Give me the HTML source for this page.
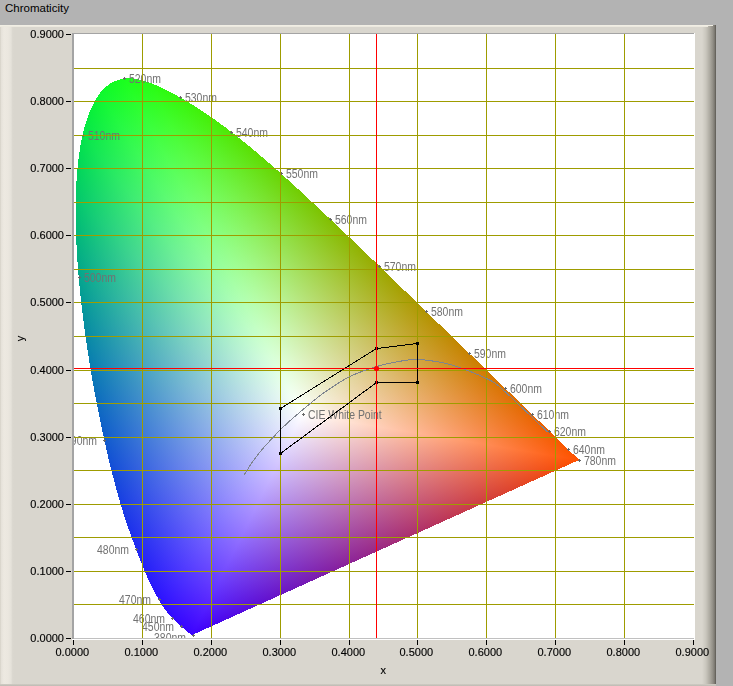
<!DOCTYPE html>
<html><head><meta charset="utf-8"><title>Chromaticity</title>
<style>
html,body{margin:0;padding:0}
body{width:733px;height:686px;overflow:hidden;background:#b3b3b3;font-family:"Liberation Sans",sans-serif}
#title{position:absolute;left:5px;top:1px;font-size:11.5px;line-height:14px;color:#000}
#panel{position:absolute;left:0;top:25px;width:716px;height:661px;background:#d9d6ce}
#hl-left{position:absolute;left:0;top:0;width:14px;height:661px;background:linear-gradient(90deg,#d5d1c7 0,#e6e2da 1.5px,#ede9e1 4px,#ebe7df 8px,#e5e2da 11px,#dbd8d0 12.5px,#d9d6ce 14px)}
#hl-top{position:absolute;left:0;top:0;width:713px;height:1px;background:#f1eee4}
#hl-top2{position:absolute;left:0;top:1px;width:708px;height:1px;background:#ece9df}
#sh-right{position:absolute;left:702px;top:0;width:14px;height:661px;background:linear-gradient(90deg,#d9d6ce 0,#c9c6bd 4px,#aba89f 8px,#908d85 11px,#76736c 13px,#56544e 14px)}
#sh-bot{position:absolute;left:0;top:659px;width:716px;height:2px;background:linear-gradient(180deg,#cfccc4,#bdbab2)}
svg{position:absolute;left:0;top:0}
text{font-family:"Liberation Sans",sans-serif;font-size:11px}
.fan polygon{mix-blend-mode:screen}
</style></head><body>
<div id="title">Chromaticity</div>
<div id="panel"><div id="hl-left"></div><div id="sh-right"></div><div id="sh-bot"></div><div id="hl-top2"></div><div id="hl-top"></div></div>
<svg width="733" height="686" viewBox="0 0 733 686">
<defs>
<clipPath id="plot"><rect x="74" y="34" width="621" height="604"/></clipPath>
<linearGradient id="g0" gradientUnits="userSpaceOnUse" x1="-238.38" y1="521.9" x2="-104.43" y2="228.64"><stop offset="0" stop-color="#000"/><stop offset="1" stop-color="#f00"/></linearGradient>
<linearGradient id="g1" gradientUnits="userSpaceOnUse" x1="100.53" y1="650.72" x2="69.65" y2="450.87"><stop offset="0" stop-color="#000"/><stop offset="1" stop-color="#0f0"/></linearGradient>
<linearGradient id="g2" gradientUnits="userSpaceOnUse" x1="727.01" y1="361.92" x2="408.41" y2="203.32"><stop offset="0" stop-color="#000"/><stop offset="1" stop-color="#00f"/></linearGradient>
<linearGradient id="g3" gradientUnits="userSpaceOnUse" x1="-271.22" y1="267.86" x2="-53.92" y2="53.26"><stop offset="0" stop-color="#000"/><stop offset="1" stop-color="#f00"/></linearGradient>
<linearGradient id="g4" gradientUnits="userSpaceOnUse" x1="-55.35" y1="614.24" x2="-34.64" y2="384.36"><stop offset="0" stop-color="#000"/><stop offset="1" stop-color="#0f0"/></linearGradient>
<linearGradient id="g5" gradientUnits="userSpaceOnUse" x1="988.46" y1="490.3" x2="408.4" y2="202.57"><stop offset="0" stop-color="#000"/><stop offset="1" stop-color="#00f"/></linearGradient>
<linearGradient id="g6" gradientUnits="userSpaceOnUse" x1="-179.87" y1="100.99" x2="53.41" y2="-29.99"><stop offset="0" stop-color="#000"/><stop offset="1" stop-color="#f00"/></linearGradient>
<linearGradient id="g7" gradientUnits="userSpaceOnUse" x1="-184.57" y1="497.01" x2="-98.63" y2="265.6"><stop offset="0" stop-color="#000"/><stop offset="1" stop-color="#0f0"/></linearGradient>
<linearGradient id="g8" gradientUnits="userSpaceOnUse" x1="2608.65" y1="1220.45" x2="407.91" y2="190.84"><stop offset="0" stop-color="#000"/><stop offset="1" stop-color="#00f"/></linearGradient>
<linearGradient id="g9" gradientUnits="userSpaceOnUse" x1="-153.46" y1="76.23" x2="77.86" y2="-38.68"><stop offset="0" stop-color="#000"/><stop offset="1" stop-color="#f00"/></linearGradient>
<linearGradient id="g10" gradientUnits="userSpaceOnUse" x1="-204.99" y1="460.26" x2="-103.99" y2="233.48"><stop offset="0" stop-color="#000"/><stop offset="1" stop-color="#0f0"/></linearGradient>
<linearGradient id="g11" gradientUnits="userSpaceOnUse" x1="6312.91" y1="2474.52" x2="403.69" y2="158.24"><stop offset="0" stop-color="#000"/><stop offset="1" stop-color="#00f"/></linearGradient>
<linearGradient id="g12" gradientUnits="userSpaceOnUse" x1="-156.01" y1="78.42" x2="75.54" y2="-37.97"><stop offset="0" stop-color="#000"/><stop offset="1" stop-color="#f00"/></linearGradient>
<linearGradient id="g13" gradientUnits="userSpaceOnUse" x1="-203.23" y1="463.87" x2="-103.65" y2="236.58"><stop offset="0" stop-color="#000"/><stop offset="1" stop-color="#0f0"/></linearGradient>
<linearGradient id="g14" gradientUnits="userSpaceOnUse" x1="5496.04" y1="2256.39" x2="405.14" y2="166.33"><stop offset="0" stop-color="#000"/><stop offset="1" stop-color="#00f"/></linearGradient>
<linearGradient id="g15" gradientUnits="userSpaceOnUse" x1="-152.89" y1="75.73" x2="78.43" y2="-38.85"><stop offset="0" stop-color="#000"/><stop offset="1" stop-color="#f00"/></linearGradient>
<linearGradient id="g16" gradientUnits="userSpaceOnUse" x1="-205.39" y1="459.51" x2="-104.05" y2="232.79"><stop offset="0" stop-color="#000"/><stop offset="1" stop-color="#0f0"/></linearGradient>
<linearGradient id="g17" gradientUnits="userSpaceOnUse" x1="6539.17" y1="2490.17" x2="402.69" y2="153.35"><stop offset="0" stop-color="#000"/><stop offset="1" stop-color="#00f"/></linearGradient>
<linearGradient id="g18" gradientUnits="userSpaceOnUse" x1="-137.71" y1="63.44" x2="92.43" y2="-42.58"><stop offset="0" stop-color="#000"/><stop offset="1" stop-color="#f00"/></linearGradient>
<linearGradient id="g19" gradientUnits="userSpaceOnUse" x1="-215.04" y1="438.17" x2="-105.22" y2="214.39"><stop offset="0" stop-color="#000"/><stop offset="1" stop-color="#0f0"/></linearGradient>
<linearGradient id="g20" gradientUnits="userSpaceOnUse" x1="25078.24" y1="-25742.56" x2="-59.72" y2="61.31"><stop offset="0" stop-color="#000"/><stop offset="1" stop-color="#00f"/></linearGradient>
<linearGradient id="g21" gradientUnits="userSpaceOnUse" x1="-112.41" y1="45.74" x2="115.25" y2="-46.9"><stop offset="0" stop-color="#000"/><stop offset="1" stop-color="#f00"/></linearGradient>
<linearGradient id="g22" gradientUnits="userSpaceOnUse" x1="-227.83" y1="401.6" x2="-104.22" y2="183.71"><stop offset="0" stop-color="#000"/><stop offset="1" stop-color="#0f0"/></linearGradient>
<linearGradient id="g23" gradientUnits="userSpaceOnUse" x1="-2928.26" y1="-2397.43" x2="384.8" y2="315.04"><stop offset="0" stop-color="#000"/><stop offset="1" stop-color="#00f"/></linearGradient>
<linearGradient id="g24" gradientUnits="userSpaceOnUse" x1="-74.71" y1="24.94" x2="148.16" y2="-49.46"><stop offset="0" stop-color="#000"/><stop offset="1" stop-color="#f00"/></linearGradient>
<linearGradient id="g25" gradientUnits="userSpaceOnUse" x1="-239.12" y1="345" x2="-95.84" y2="138.28"><stop offset="0" stop-color="#000"/><stop offset="1" stop-color="#0f0"/></linearGradient>
<linearGradient id="g26" gradientUnits="userSpaceOnUse" x1="-971.99" y1="-719.74" x2="394.16" y2="291.86"><stop offset="0" stop-color="#000"/><stop offset="1" stop-color="#00f"/></linearGradient>
<linearGradient id="g27" gradientUnits="userSpaceOnUse" x1="-42.51" y1="11.7" x2="175.64" y2="-48.35"><stop offset="0" stop-color="#000"/><stop offset="1" stop-color="#f00"/></linearGradient>
<linearGradient id="g28" gradientUnits="userSpaceOnUse" x1="-241.24" y1="295.52" x2="-81.97" y2="100.42"><stop offset="0" stop-color="#000"/><stop offset="1" stop-color="#0f0"/></linearGradient>
<linearGradient id="g29" gradientUnits="userSpaceOnUse" x1="-497.55" y1="-375.03" x2="392.68" y2="295.98"><stop offset="0" stop-color="#000"/><stop offset="1" stop-color="#00f"/></linearGradient>
<linearGradient id="g30" gradientUnits="userSpaceOnUse" x1="-15.56" y1="3.53" x2="198.7" y2="-45.12"><stop offset="0" stop-color="#000"/><stop offset="1" stop-color="#f00"/></linearGradient>
<linearGradient id="g31" gradientUnits="userSpaceOnUse" x1="-237.92" y1="254.52" x2="-65.57" y2="70.14"><stop offset="0" stop-color="#000"/><stop offset="1" stop-color="#0f0"/></linearGradient>
<linearGradient id="g32" gradientUnits="userSpaceOnUse" x1="-288.16" y1="-228.06" x2="388.24" y2="307.26"><stop offset="0" stop-color="#000"/><stop offset="1" stop-color="#00f"/></linearGradient>
<linearGradient id="g33" gradientUnits="userSpaceOnUse" x1="2.99" y1="-0.58" x2="215.14" y2="-41.49"><stop offset="0" stop-color="#000"/><stop offset="1" stop-color="#f00"/></linearGradient>
<linearGradient id="g34" gradientUnits="userSpaceOnUse" x1="-233.59" y1="227.6" x2="-51.83" y2="50.5"><stop offset="0" stop-color="#000"/><stop offset="1" stop-color="#0f0"/></linearGradient>
<linearGradient id="g35" gradientUnits="userSpaceOnUse" x1="-189.52" y1="-159.54" x2="381.77" y2="321.37"><stop offset="0" stop-color="#000"/><stop offset="1" stop-color="#00f"/></linearGradient>
<linearGradient id="g36" gradientUnits="userSpaceOnUse" x1="26.72" y1="-3.89" x2="237.66" y2="-34.62"><stop offset="0" stop-color="#000"/><stop offset="1" stop-color="#f00"/></linearGradient>
<linearGradient id="g37" gradientUnits="userSpaceOnUse" x1="-227.07" y1="196.11" x2="-31.56" y2="27.26"><stop offset="0" stop-color="#000"/><stop offset="1" stop-color="#0f0"/></linearGradient>
<linearGradient id="g38" gradientUnits="userSpaceOnUse" x1="-96.82" y1="-92.47" x2="365.7" y2="349.28"><stop offset="0" stop-color="#000"/><stop offset="1" stop-color="#00f"/></linearGradient>
<linearGradient id="g39" gradientUnits="userSpaceOnUse" x1="42.52" y1="-4.68" x2="254.39" y2="-28"><stop offset="0" stop-color="#000"/><stop offset="1" stop-color="#f00"/></linearGradient>
<linearGradient id="g40" gradientUnits="userSpaceOnUse" x1="-223.87" y1="178.24" x2="-16.6" y2="13.22"><stop offset="0" stop-color="#000"/><stop offset="1" stop-color="#0f0"/></linearGradient>
<linearGradient id="g41" gradientUnits="userSpaceOnUse" x1="-51.07" y1="-55.64" x2="345.22" y2="376.17"><stop offset="0" stop-color="#000"/><stop offset="1" stop-color="#00f"/></linearGradient>
<linearGradient id="g42" gradientUnits="userSpaceOnUse" x1="56.63" y1="-4.05" x2="272.09" y2="-19.45"><stop offset="0" stop-color="#000"/><stop offset="1" stop-color="#f00"/></linearGradient>
<linearGradient id="g43" gradientUnits="userSpaceOnUse" x1="-225.11" y1="166.72" x2="-2.63" y2="1.95"><stop offset="0" stop-color="#000"/><stop offset="1" stop-color="#0f0"/></linearGradient>
<linearGradient id="g44" gradientUnits="userSpaceOnUse" x1="-20.26" y1="-26.73" x2="310.31" y2="409.35"><stop offset="0" stop-color="#000"/><stop offset="1" stop-color="#00f"/></linearGradient>
<linearGradient id="g45" gradientUnits="userSpaceOnUse" x1="70.75" y1="-1.5" x2="294.22" y2="-6.23"><stop offset="0" stop-color="#000"/><stop offset="1" stop-color="#f00"/></linearGradient>
<linearGradient id="g46" gradientUnits="userSpaceOnUse" x1="-235.4" y1="162.25" x2="11.68" y2="-8.05"><stop offset="0" stop-color="#000"/><stop offset="1" stop-color="#0f0"/></linearGradient>
<linearGradient id="g47" gradientUnits="userSpaceOnUse" x1="-0.7" y1="-1.26" x2="246.62" y2="446.04"><stop offset="0" stop-color="#000"/><stop offset="1" stop-color="#00f"/></linearGradient>
<linearGradient id="g48" gradientUnits="userSpaceOnUse" x1="85.88" y1="4.85" x2="325.52" y2="18.39"><stop offset="0" stop-color="#000"/><stop offset="1" stop-color="#f00"/></linearGradient>
<linearGradient id="g49" gradientUnits="userSpaceOnUse" x1="-268.81" y1="171.29" x2="27.61" y2="-17.59"><stop offset="0" stop-color="#000"/><stop offset="1" stop-color="#0f0"/></linearGradient>
<linearGradient id="g50" gradientUnits="userSpaceOnUse" x1="5.54" y1="18.94" x2="135.73" y2="463.79"><stop offset="0" stop-color="#000"/><stop offset="1" stop-color="#00f"/></linearGradient>
<linearGradient id="g51" gradientUnits="userSpaceOnUse" x1="99.63" y1="18.67" x2="367.94" y2="68.95"><stop offset="0" stop-color="#000"/><stop offset="1" stop-color="#f00"/></linearGradient>
<linearGradient id="g52" gradientUnits="userSpaceOnUse" x1="-372.27" y1="218.08" x2="44.77" y2="-26.23"><stop offset="0" stop-color="#000"/><stop offset="1" stop-color="#0f0"/></linearGradient>
<linearGradient id="g53" gradientUnits="userSpaceOnUse" x1="-0.02" y1="22.22" x2="-0.3" y2="414.58"><stop offset="0" stop-color="#000"/><stop offset="1" stop-color="#00f"/></linearGradient>
<linearGradient id="g54" gradientUnits="userSpaceOnUse" x1="102.21" y1="46.42" x2="407.47" y2="185.06"><stop offset="0" stop-color="#000"/><stop offset="1" stop-color="#f00"/></linearGradient>
<linearGradient id="g55" gradientUnits="userSpaceOnUse" x1="-894.72" y1="475.36" x2="64.53" y2="-34.29"><stop offset="0" stop-color="#000"/><stop offset="1" stop-color="#0f0"/></linearGradient>
<linearGradient id="g56" gradientUnits="userSpaceOnUse" x1="-1.5" y1="4.92" x2="-90.01" y2="294.74"><stop offset="0" stop-color="#000"/><stop offset="1" stop-color="#00f"/></linearGradient>
<linearGradient id="g57" gradientUnits="userSpaceOnUse" x1="67.83" y1="74.59" x2="343.68" y2="377.92"><stop offset="0" stop-color="#000"/><stop offset="1" stop-color="#f00"/></linearGradient>
<linearGradient id="g58" gradientUnits="userSpaceOnUse" x1="2184.42" y1="-1160.57" x2="64.53" y2="-34.29"><stop offset="0" stop-color="#000"/><stop offset="1" stop-color="#0f0"/></linearGradient>
<linearGradient id="g59" gradientUnits="userSpaceOnUse" x1="9.04" y1="-16" x2="-104.31" y2="184.77"><stop offset="0" stop-color="#000"/><stop offset="1" stop-color="#00f"/></linearGradient>
<linearGradient id="g60" gradientUnits="userSpaceOnUse" x1="28.83" y1="65.33" x2="202.66" y2="459.14"><stop offset="0" stop-color="#000"/><stop offset="1" stop-color="#f00"/></linearGradient>
<linearGradient id="g61" gradientUnits="userSpaceOnUse" x1="796.84" y1="-382.92" x2="84.32" y2="-40.52"><stop offset="0" stop-color="#000"/><stop offset="1" stop-color="#0f0"/></linearGradient>
<linearGradient id="g62" gradientUnits="userSpaceOnUse" x1="19" y1="-27.06" x2="-94.98" y2="135.29"><stop offset="0" stop-color="#000"/><stop offset="1" stop-color="#00f"/></linearGradient>
<linearGradient id="g63" gradientUnits="userSpaceOnUse" x1="11.85" y1="47.11" x2="116.14" y2="461.82"><stop offset="0" stop-color="#000"/><stop offset="1" stop-color="#f00"/></linearGradient>
<linearGradient id="g64" gradientUnits="userSpaceOnUse" x1="630.2" y1="-287.59" x2="94.22" y2="-43"><stop offset="0" stop-color="#000"/><stop offset="1" stop-color="#0f0"/></linearGradient>
<linearGradient id="g65" gradientUnits="userSpaceOnUse" x1="25.24" y1="-32.78" x2="-87.68" y2="113.87"><stop offset="0" stop-color="#000"/><stop offset="1" stop-color="#00f"/></linearGradient>
<linearGradient id="g66" gradientUnits="userSpaceOnUse" x1="2.79" y1="25.42" x2="48.61" y2="442.74"><stop offset="0" stop-color="#000"/><stop offset="1" stop-color="#f00"/></linearGradient>
<linearGradient id="g67" gradientUnits="userSpaceOnUse" x1="551.5" y1="-238.23" x2="104.46" y2="-45.12"><stop offset="0" stop-color="#000"/><stop offset="1" stop-color="#0f0"/></linearGradient>
<linearGradient id="g68" gradientUnits="userSpaceOnUse" x1="31.43" y1="-37.96" x2="-80.48" y2="97.22"><stop offset="0" stop-color="#000"/><stop offset="1" stop-color="#00f"/></linearGradient>
<linearGradient id="g69" gradientUnits="userSpaceOnUse" x1="0.03" y1="5.01" x2="2.4" y2="416.53"><stop offset="0" stop-color="#000"/><stop offset="1" stop-color="#f00"/></linearGradient>
<linearGradient id="g70" gradientUnits="userSpaceOnUse" x1="511.44" y1="-209.44" x2="114.12" y2="-46.74"><stop offset="0" stop-color="#000"/><stop offset="1" stop-color="#0f0"/></linearGradient>
<linearGradient id="g71" gradientUnits="userSpaceOnUse" x1="37.12" y1="-42.41" x2="-74.08" y2="84.63"><stop offset="0" stop-color="#000"/><stop offset="1" stop-color="#00f"/></linearGradient>
<linearGradient id="g72" gradientUnits="userSpaceOnUse" x1="0.82" y1="-12" x2="-26.81" y2="392.24"><stop offset="0" stop-color="#000"/><stop offset="1" stop-color="#f00"/></linearGradient>
<linearGradient id="g73" gradientUnits="userSpaceOnUse" x1="491.31" y1="-191.5" x2="122.8" y2="-47.86"><stop offset="0" stop-color="#000"/><stop offset="1" stop-color="#0f0"/></linearGradient>
<linearGradient id="g74" gradientUnits="userSpaceOnUse" x1="42.05" y1="-46.07" x2="-68.8" y2="75.39"><stop offset="0" stop-color="#000"/><stop offset="1" stop-color="#00f"/></linearGradient>
<linearGradient id="g75" gradientUnits="userSpaceOnUse" x1="2.63" y1="-23.43" x2="-42.2" y2="376.05"><stop offset="0" stop-color="#000"/><stop offset="1" stop-color="#f00"/></linearGradient>
<linearGradient id="g76" gradientUnits="userSpaceOnUse" x1="483.32" y1="-181.39" x2="129.25" y2="-48.51"><stop offset="0" stop-color="#000"/><stop offset="1" stop-color="#0f0"/></linearGradient>
<linearGradient id="g77" gradientUnits="userSpaceOnUse" x1="45.52" y1="-48.59" x2="-65.28" y2="69.69"><stop offset="0" stop-color="#000"/><stop offset="1" stop-color="#00f"/></linearGradient>
<linearGradient id="g78" gradientUnits="userSpaceOnUse" x1="4.19" y1="-30.68" x2="-50.08" y2="366.54"><stop offset="0" stop-color="#000"/><stop offset="1" stop-color="#f00"/></linearGradient>
<linearGradient id="g79" gradientUnits="userSpaceOnUse" x1="480.93" y1="-175.63" x2="133.8" y2="-48.86"><stop offset="0" stop-color="#000"/><stop offset="1" stop-color="#0f0"/></linearGradient>
<linearGradient id="g80" gradientUnits="userSpaceOnUse" x1="47.81" y1="-50.25" x2="-63.11" y2="66.33"><stop offset="0" stop-color="#000"/><stop offset="1" stop-color="#00f"/></linearGradient>
<linearGradient id="g81" gradientUnits="userSpaceOnUse" x1="5.61" y1="-36.51" x2="-55.29" y2="359.71"><stop offset="0" stop-color="#000"/><stop offset="1" stop-color="#f00"/></linearGradient>
<linearGradient id="g82" gradientUnits="userSpaceOnUse" x1="480.8" y1="-171.32" x2="137.82" y2="-49.11"><stop offset="0" stop-color="#000"/><stop offset="1" stop-color="#0f0"/></linearGradient>
<linearGradient id="g83" gradientUnits="userSpaceOnUse" x1="49.7" y1="-51.63" x2="-61.43" y2="63.81"><stop offset="0" stop-color="#000"/><stop offset="1" stop-color="#00f"/></linearGradient>
<linearGradient id="g84" gradientUnits="userSpaceOnUse" x1="6.05" y1="-38.26" x2="-56.58" y2="357.93"><stop offset="0" stop-color="#000"/><stop offset="1" stop-color="#f00"/></linearGradient>
<linearGradient id="g85" gradientUnits="userSpaceOnUse" x1="481.23" y1="-170.1" x2="139.13" y2="-49.18"><stop offset="0" stop-color="#000"/><stop offset="1" stop-color="#0f0"/></linearGradient>
<linearGradient id="g86" gradientUnits="userSpaceOnUse" x1="50.28" y1="-52.05" x2="-60.95" y2="63.1"><stop offset="0" stop-color="#000"/><stop offset="1" stop-color="#00f"/></linearGradient>
<linearGradient id="g87" gradientUnits="userSpaceOnUse" x1="6.73" y1="-41.04" x2="-58.3" y2="355.53"><stop offset="0" stop-color="#000"/><stop offset="1" stop-color="#f00"/></linearGradient>
<linearGradient id="g88" gradientUnits="userSpaceOnUse" x1="482.57" y1="-168.22" x2="141.36" y2="-49.28"><stop offset="0" stop-color="#000"/><stop offset="1" stop-color="#0f0"/></linearGradient>
<linearGradient id="g89" gradientUnits="userSpaceOnUse" x1="51.21" y1="-52.75" x2="-60.22" y2="62.03"><stop offset="0" stop-color="#000"/><stop offset="1" stop-color="#00f"/></linearGradient>
<linearGradient id="g90" gradientUnits="userSpaceOnUse" x1="6.96" y1="-42.01" x2="-58.8" y2="354.82"><stop offset="0" stop-color="#000"/><stop offset="1" stop-color="#f00"/></linearGradient>
<linearGradient id="g91" gradientUnits="userSpaceOnUse" x1="483.25" y1="-167.57" x2="142.19" y2="-49.31"><stop offset="0" stop-color="#000"/><stop offset="1" stop-color="#0f0"/></linearGradient>
<linearGradient id="g92" gradientUnits="userSpaceOnUse" x1="51.54" y1="-53" x2="-59.98" y2="61.68"><stop offset="0" stop-color="#000"/><stop offset="1" stop-color="#00f"/></linearGradient>
<linearGradient id="g93" gradientUnits="userSpaceOnUse" x1="6.95" y1="-41.97" x2="-58.78" y2="354.85"><stop offset="0" stop-color="#000"/><stop offset="1" stop-color="#f00"/></linearGradient>
<linearGradient id="g94" gradientUnits="userSpaceOnUse" x1="483.21" y1="-167.6" x2="142.15" y2="-49.31"><stop offset="0" stop-color="#000"/><stop offset="1" stop-color="#0f0"/></linearGradient>
<linearGradient id="g95" gradientUnits="userSpaceOnUse" x1="51.52" y1="-52.99" x2="-59.99" y2="61.7"><stop offset="0" stop-color="#000"/><stop offset="1" stop-color="#00f"/></linearGradient>
<linearGradient id="g96" gradientUnits="userSpaceOnUse" x1="6.67" y1="-40.63" x2="-58.32" y2="355.5"><stop offset="0" stop-color="#000"/><stop offset="1" stop-color="#f00"/></linearGradient>
<linearGradient id="g97" gradientUnits="userSpaceOnUse" x1="481.81" y1="-168.44" x2="140.9" y2="-49.26"><stop offset="0" stop-color="#000"/><stop offset="1" stop-color="#0f0"/></linearGradient>
<linearGradient id="g98" gradientUnits="userSpaceOnUse" x1="51.07" y1="-52.63" x2="-60.3" y2="62.14"><stop offset="0" stop-color="#000"/><stop offset="1" stop-color="#00f"/></linearGradient>
<linearGradient id="g99" gradientUnits="userSpaceOnUse" x1="7.21" y1="-43.25" x2="-59.05" y2="354.46"><stop offset="0" stop-color="#000"/><stop offset="1" stop-color="#f00"/></linearGradient>
<linearGradient id="g100" gradientUnits="userSpaceOnUse" x1="484.92" y1="-166.83" x2="143.45" y2="-49.35"><stop offset="0" stop-color="#000"/><stop offset="1" stop-color="#0f0"/></linearGradient>
<linearGradient id="g101" gradientUnits="userSpaceOnUse" x1="51.97" y1="-53.35" x2="-59.72" y2="61.31"><stop offset="0" stop-color="#000"/><stop offset="1" stop-color="#00f"/></linearGradient>
<linearGradient id="g102" gradientUnits="userSpaceOnUse" x1="6.87" y1="-41.54" x2="-58.67" y2="355.01"><stop offset="0" stop-color="#000"/><stop offset="1" stop-color="#f00"/></linearGradient>
<linearGradient id="g103" gradientUnits="userSpaceOnUse" x1="482.69" y1="-167.86" x2="141.73" y2="-49.29"><stop offset="0" stop-color="#000"/><stop offset="1" stop-color="#0f0"/></linearGradient>
<linearGradient id="g104" gradientUnits="userSpaceOnUse" x1="51.38" y1="-52.87" x2="-60.08" y2="61.83"><stop offset="0" stop-color="#000"/><stop offset="1" stop-color="#00f"/></linearGradient>
<linearGradient id="g105" gradientUnits="userSpaceOnUse" x1="6.82" y1="-41.3" x2="-58.63" y2="355.07"><stop offset="0" stop-color="#000"/><stop offset="1" stop-color="#f00"/></linearGradient>
<linearGradient id="g106" gradientUnits="userSpaceOnUse" x1="482.35" y1="-168.01" x2="141.49" y2="-49.28"><stop offset="0" stop-color="#000"/><stop offset="1" stop-color="#0f0"/></linearGradient>
<linearGradient id="g107" gradientUnits="userSpaceOnUse" x1="51.29" y1="-52.8" x2="-60.13" y2="61.9"><stop offset="0" stop-color="#000"/><stop offset="1" stop-color="#00f"/></linearGradient>
<linearGradient id="g108" gradientUnits="userSpaceOnUse" x1="6.29" y1="-38.4" x2="-58.22" y2="355.64"><stop offset="0" stop-color="#000"/><stop offset="1" stop-color="#f00"/></linearGradient>
<linearGradient id="g109" gradientUnits="userSpaceOnUse" x1="477.99" y1="-169.69" x2="138.43" y2="-49.14"><stop offset="0" stop-color="#000"/><stop offset="1" stop-color="#0f0"/></linearGradient>
<linearGradient id="g110" gradientUnits="userSpaceOnUse" x1="50.28" y1="-51.97" x2="-60.71" y2="62.75"><stop offset="0" stop-color="#000"/><stop offset="1" stop-color="#00f"/></linearGradient>
<linearGradient id="g111" gradientUnits="userSpaceOnUse" x1="7.2" y1="-43.46" x2="-58.77" y2="354.86"><stop offset="0" stop-color="#000"/><stop offset="1" stop-color="#f00"/></linearGradient>
<linearGradient id="g112" gradientUnits="userSpaceOnUse" x1="485.88" y1="-166.76" x2="143.82" y2="-49.36"><stop offset="0" stop-color="#000"/><stop offset="1" stop-color="#0f0"/></linearGradient>
<linearGradient id="g113" gradientUnits="userSpaceOnUse" x1="52.05" y1="-53.43" x2="-59.72" y2="61.31"><stop offset="0" stop-color="#000"/><stop offset="1" stop-color="#00f"/></linearGradient>
<linearGradient id="g114" gradientUnits="userSpaceOnUse" x1="7.2" y1="-43.46" x2="-58.77" y2="354.86"><stop offset="0" stop-color="#000"/><stop offset="1" stop-color="#f00"/></linearGradient>
<linearGradient id="g115" gradientUnits="userSpaceOnUse" x1="485.88" y1="-166.76" x2="143.82" y2="-49.36"><stop offset="0" stop-color="#000"/><stop offset="1" stop-color="#0f0"/></linearGradient>
<linearGradient id="g116" gradientUnits="userSpaceOnUse" x1="52.05" y1="-53.43" x2="-59.72" y2="61.31"><stop offset="0" stop-color="#000"/><stop offset="1" stop-color="#00f"/></linearGradient>
<linearGradient id="g117" gradientUnits="userSpaceOnUse" x1="6.71" y1="-40.67" x2="-58.59" y2="355.12"><stop offset="0" stop-color="#000"/><stop offset="1" stop-color="#f00"/></linearGradient>
<linearGradient id="g118" gradientUnits="userSpaceOnUse" x1="481.29" y1="-168.37" x2="140.79" y2="-49.25"><stop offset="0" stop-color="#000"/><stop offset="1" stop-color="#0f0"/></linearGradient>
<linearGradient id="g119" gradientUnits="userSpaceOnUse" x1="51.07" y1="-52.62" x2="-60.25" y2="62.08"><stop offset="0" stop-color="#000"/><stop offset="1" stop-color="#00f"/></linearGradient>
<linearGradient id="g120" gradientUnits="userSpaceOnUse" x1="7.2" y1="-43.51" x2="-58.7" y2="354.96"><stop offset="0" stop-color="#000"/><stop offset="1" stop-color="#f00"/></linearGradient>
<linearGradient id="g121" gradientUnits="userSpaceOnUse" x1="486.12" y1="-166.74" x2="143.92" y2="-49.37"><stop offset="0" stop-color="#000"/><stop offset="1" stop-color="#0f0"/></linearGradient>
<linearGradient id="g122" gradientUnits="userSpaceOnUse" x1="52.07" y1="-53.45" x2="-59.72" y2="61.31"><stop offset="0" stop-color="#000"/><stop offset="1" stop-color="#00f"/></linearGradient>
<linearGradient id="g123" gradientUnits="userSpaceOnUse" x1="6.06" y1="-36.77" x2="-58.54" y2="355.18"><stop offset="0" stop-color="#000"/><stop offset="1" stop-color="#f00"/></linearGradient>
<linearGradient id="g124" gradientUnits="userSpaceOnUse" x1="474.34" y1="-170.5" x2="136.41" y2="-49.03"><stop offset="0" stop-color="#000"/><stop offset="1" stop-color="#0f0"/></linearGradient>
<linearGradient id="g125" gradientUnits="userSpaceOnUse" x1="49.69" y1="-51.45" x2="-60.97" y2="63.12"><stop offset="0" stop-color="#000"/><stop offset="1" stop-color="#00f"/></linearGradient>
<linearGradient id="g126" gradientUnits="userSpaceOnUse" x1="7.19" y1="-43.56" x2="-58.63" y2="355.06"><stop offset="0" stop-color="#000"/><stop offset="1" stop-color="#f00"/></linearGradient>
<linearGradient id="g127" gradientUnits="userSpaceOnUse" x1="486.36" y1="-166.72" x2="144.01" y2="-49.37"><stop offset="0" stop-color="#000"/><stop offset="1" stop-color="#0f0"/></linearGradient>
<linearGradient id="g128" gradientUnits="userSpaceOnUse" x1="52.09" y1="-53.47" x2="-59.72" y2="61.31"><stop offset="0" stop-color="#000"/><stop offset="1" stop-color="#00f"/></linearGradient>
<linearGradient id="g129" gradientUnits="userSpaceOnUse" x1="7.19" y1="-43.56" x2="-58.63" y2="355.06"><stop offset="0" stop-color="#000"/><stop offset="1" stop-color="#f00"/></linearGradient>
<linearGradient id="g130" gradientUnits="userSpaceOnUse" x1="486.36" y1="-166.72" x2="144.01" y2="-49.37"><stop offset="0" stop-color="#000"/><stop offset="1" stop-color="#0f0"/></linearGradient>
<linearGradient id="g131" gradientUnits="userSpaceOnUse" x1="52.09" y1="-53.47" x2="-59.72" y2="61.31"><stop offset="0" stop-color="#000"/><stop offset="1" stop-color="#00f"/></linearGradient>
<linearGradient id="g132" gradientUnits="userSpaceOnUse" x1="7.19" y1="-43.56" x2="-58.63" y2="355.06"><stop offset="0" stop-color="#000"/><stop offset="1" stop-color="#f00"/></linearGradient>
<linearGradient id="g133" gradientUnits="userSpaceOnUse" x1="486.36" y1="-166.72" x2="144.01" y2="-49.37"><stop offset="0" stop-color="#000"/><stop offset="1" stop-color="#0f0"/></linearGradient>
<linearGradient id="g134" gradientUnits="userSpaceOnUse" x1="52.09" y1="-53.47" x2="-59.72" y2="61.31"><stop offset="0" stop-color="#000"/><stop offset="1" stop-color="#00f"/></linearGradient>
<linearGradient id="g135" gradientUnits="userSpaceOnUse" x1="-108.87" y1="659.28" x2="-58.63" y2="355.06"><stop offset="0" stop-color="#000"/><stop offset="1" stop-color="#f00"/></linearGradient>
<linearGradient id="g136" gradientUnits="userSpaceOnUse" x1="191.03" y1="637" x2="139.14" y2="463.97"><stop offset="0" stop-color="#000"/><stop offset="1" stop-color="#0f0"/></linearGradient>
<linearGradient id="g137" gradientUnits="userSpaceOnUse" x1="648.21" y1="322.69" x2="408.41" y2="203.32"><stop offset="0" stop-color="#000"/><stop offset="1" stop-color="#00f"/></linearGradient>
</defs>
<rect x="72" y="33" width="623" height="607" fill="#fff"/>
<rect x="72" y="33" width="622" height="1" fill="#a4a4a4"/>
<rect x="72" y="33" width="2" height="606" fill="#a4a4a4"/>
<rect x="74" y="638" width="620" height="1" fill="#c0c0c0"/>
<g clip-path="url(#plot)">
<g transform="translate(-0.5,-0.5)"><g class="fan" style="isolation:isolate" shape-rendering="crispEdges">
<rect x="74" y="34" width="622" height="605" fill="#000"/>
<polygon points="303.13,414.8 186.85,648.37 186.27,648.51" fill="url(#g0)"/>
<polygon points="303.13,414.8 186.85,648.37 186.27,648.51" fill="url(#g1)"/>
<polygon points="303.13,414.8 186.85,648.37 186.27,648.51" fill="url(#g2)"/>
<polygon points="303.13,414.8 186.27,648.51 184.88,648.29" fill="url(#g3)"/>
<polygon points="303.13,414.8 186.27,648.51 184.88,648.29" fill="url(#g4)"/>
<polygon points="303.13,414.8 186.27,648.51 184.88,648.29" fill="url(#g5)"/>
<polygon points="303.13,414.8 184.88,648.29 183.06,647.01" fill="url(#g6)"/>
<polygon points="303.13,414.8 184.88,648.29 183.06,647.01" fill="url(#g7)"/>
<polygon points="303.13,414.8 184.88,648.29 183.06,647.01" fill="url(#g8)"/>
<polygon points="303.13,414.8 183.06,647.01 179.77,644.17" fill="url(#g9)"/>
<polygon points="303.13,414.8 183.06,647.01 179.77,644.17" fill="url(#g10)"/>
<polygon points="303.13,414.8 183.06,647.01 179.77,644.17" fill="url(#g11)"/>
<polygon points="303.13,414.8 179.77,644.17 174.08,639.33" fill="url(#g12)"/>
<polygon points="303.13,414.8 179.77,644.17 174.08,639.33" fill="url(#g13)"/>
<polygon points="303.13,414.8 179.77,644.17 174.08,639.33" fill="url(#g14)"/>
<polygon points="303.13,414.8 174.08,639.33 169.99,635.77" fill="url(#g15)"/>
<polygon points="303.13,414.8 174.08,639.33 169.99,635.77" fill="url(#g16)"/>
<polygon points="303.13,414.8 174.08,639.33 169.99,635.77" fill="url(#g17)"/>
<polygon points="303.13,414.8 169.99,635.77 164.87,630.79" fill="url(#g18)"/>
<polygon points="303.13,414.8 169.99,635.77 164.87,630.79" fill="url(#g19)"/>
<polygon points="303.13,414.8 169.99,635.77 164.87,630.79" fill="url(#g20)"/>
<polygon points="303.13,414.8 164.87,630.79 158.67,623.54" fill="url(#g21)"/>
<polygon points="303.13,414.8 164.87,630.79 158.67,623.54" fill="url(#g22)"/>
<polygon points="303.13,414.8 164.87,630.79 158.67,623.54" fill="url(#g23)"/>
<polygon points="303.13,414.8 158.67,623.54 150.34,610.8" fill="url(#g24)"/>
<polygon points="303.13,414.8 158.67,623.54 150.34,610.8" fill="url(#g25)"/>
<polygon points="303.13,414.8 158.67,623.54 150.34,610.8" fill="url(#g26)"/>
<polygon points="303.13,414.8 150.34,610.8 139.75,590.17" fill="url(#g27)"/>
<polygon points="303.13,414.8 150.34,610.8 139.75,590.17" fill="url(#g28)"/>
<polygon points="303.13,414.8 150.34,610.8 139.75,590.17" fill="url(#g29)"/>
<polygon points="303.13,414.8 139.75,590.17 126.39,557.52" fill="url(#g30)"/>
<polygon points="303.13,414.8 139.75,590.17 126.39,557.52" fill="url(#g31)"/>
<polygon points="303.13,414.8 139.75,590.17 126.39,557.52" fill="url(#g32)"/>
<polygon points="303.13,414.8 126.39,557.52 109.89,509.15" fill="url(#g33)"/>
<polygon points="303.13,414.8 126.39,557.52 109.89,509.15" fill="url(#g34)"/>
<polygon points="303.13,414.8 126.39,557.52 109.89,509.15" fill="url(#g35)"/>
<polygon points="303.13,414.8 109.89,509.15 92.87,442.07" fill="url(#g36)"/>
<polygon points="303.13,414.8 109.89,509.15 92.87,442.07" fill="url(#g37)"/>
<polygon points="303.13,414.8 109.89,509.15 92.87,442.07" fill="url(#g38)"/>
<polygon points="303.13,414.8 92.87,442.07 76.88,358.34" fill="url(#g39)"/>
<polygon points="303.13,414.8 92.87,442.07 76.88,358.34" fill="url(#g40)"/>
<polygon points="303.13,414.8 92.87,442.07 76.88,358.34" fill="url(#g41)"/>
<polygon points="303.13,414.8 76.88,358.34 65.71,268.92" fill="url(#g42)"/>
<polygon points="303.13,414.8 76.88,358.34 65.71,268.92" fill="url(#g43)"/>
<polygon points="303.13,414.8 76.88,358.34 65.71,268.92" fill="url(#g44)"/>
<polygon points="303.13,414.8 65.71,268.92 62.57,186.11" fill="url(#g45)"/>
<polygon points="303.13,414.8 65.71,268.92 62.57,186.11" fill="url(#g46)"/>
<polygon points="303.13,414.8 65.71,268.92 62.57,186.11" fill="url(#g47)"/>
<polygon points="303.13,414.8 62.57,186.11 69.87,118.25" fill="url(#g48)"/>
<polygon points="303.13,414.8 62.57,186.11 69.87,118.25" fill="url(#g49)"/>
<polygon points="303.13,414.8 62.57,186.11 69.87,118.25" fill="url(#g50)"/>
<polygon points="303.13,414.8 69.87,118.25 88.13,74.28" fill="url(#g51)"/>
<polygon points="303.13,414.8 69.87,118.25 88.13,74.28" fill="url(#g52)"/>
<polygon points="303.13,414.8 69.87,118.25 88.13,74.28" fill="url(#g53)"/>
<polygon points="303.13,414.8 88.13,74.28 113.98,58.78" fill="url(#g54)"/>
<polygon points="303.13,414.8 88.13,74.28 113.98,58.78" fill="url(#g55)"/>
<polygon points="303.13,414.8 88.13,74.28 113.98,58.78" fill="url(#g56)"/>
<polygon points="303.13,414.8 113.98,58.78 143.11,64.18" fill="url(#g57)"/>
<polygon points="303.13,414.8 113.98,58.78 143.11,64.18" fill="url(#g58)"/>
<polygon points="303.13,414.8 113.98,58.78 143.11,64.18" fill="url(#g59)"/>
<polygon points="303.13,414.8 143.11,64.18 172.69,78.62" fill="url(#g60)"/>
<polygon points="303.13,414.8 143.11,64.18 172.69,78.62" fill="url(#g61)"/>
<polygon points="303.13,414.8 143.11,64.18 172.69,78.62" fill="url(#g62)"/>
<polygon points="303.13,414.8 172.69,78.62 200.58,95.91" fill="url(#g63)"/>
<polygon points="303.13,414.8 172.69,78.62 200.58,95.91" fill="url(#g64)"/>
<polygon points="303.13,414.8 172.69,78.62 200.58,95.91" fill="url(#g65)"/>
<polygon points="303.13,414.8 200.58,95.91 227.38,115.33" fill="url(#g66)"/>
<polygon points="303.13,414.8 200.58,95.91 227.38,115.33" fill="url(#g67)"/>
<polygon points="303.13,414.8 200.58,95.91 227.38,115.33" fill="url(#g68)"/>
<polygon points="303.13,414.8 227.38,115.33 253.82,136.67" fill="url(#g69)"/>
<polygon points="303.13,414.8 227.38,115.33 253.82,136.67" fill="url(#g70)"/>
<polygon points="303.13,414.8 227.38,115.33 253.82,136.67" fill="url(#g71)"/>
<polygon points="303.13,414.8 253.82,136.67 279.96,159.44" fill="url(#g72)"/>
<polygon points="303.13,414.8 253.82,136.67 279.96,159.44" fill="url(#g73)"/>
<polygon points="303.13,414.8 253.82,136.67 279.96,159.44" fill="url(#g74)"/>
<polygon points="303.13,414.8 279.96,159.44 306.03,183.2" fill="url(#g75)"/>
<polygon points="303.13,414.8 279.96,159.44 306.03,183.2" fill="url(#g76)"/>
<polygon points="303.13,414.8 279.96,159.44 306.03,183.2" fill="url(#g77)"/>
<polygon points="303.13,414.8 306.03,183.2 332.17,207.67" fill="url(#g78)"/>
<polygon points="303.13,414.8 306.03,183.2 332.17,207.67" fill="url(#g79)"/>
<polygon points="303.13,414.8 306.03,183.2 332.17,207.67" fill="url(#g80)"/>
<polygon points="303.13,414.8 332.17,207.67 358.16,232.49" fill="url(#g81)"/>
<polygon points="303.13,414.8 332.17,207.67 358.16,232.49" fill="url(#g82)"/>
<polygon points="303.13,414.8 332.17,207.67 358.16,232.49" fill="url(#g83)"/>
<polygon points="303.13,414.8 358.16,232.49 384.01,257.32" fill="url(#g84)"/>
<polygon points="303.13,414.8 358.16,232.49 384.01,257.32" fill="url(#g85)"/>
<polygon points="303.13,414.8 358.16,232.49 384.01,257.32" fill="url(#g86)"/>
<polygon points="303.13,414.8 384.01,257.32 409.35,281.86" fill="url(#g87)"/>
<polygon points="303.13,414.8 384.01,257.32 409.35,281.86" fill="url(#g88)"/>
<polygon points="303.13,414.8 384.01,257.32 409.35,281.86" fill="url(#g89)"/>
<polygon points="303.13,414.8 409.35,281.86 433.96,305.77" fill="url(#g90)"/>
<polygon points="303.13,414.8 409.35,281.86 433.96,305.77" fill="url(#g91)"/>
<polygon points="303.13,414.8 409.35,281.86 433.96,305.77" fill="url(#g92)"/>
<polygon points="303.13,414.8 433.96,305.77 457.55,328.67" fill="url(#g93)"/>
<polygon points="303.13,414.8 433.96,305.77 457.55,328.67" fill="url(#g94)"/>
<polygon points="303.13,414.8 433.96,305.77 457.55,328.67" fill="url(#g95)"/>
<polygon points="303.13,414.8 457.55,328.67 479.75,350.16" fill="url(#g96)"/>
<polygon points="303.13,414.8 457.55,328.67 479.75,350.16" fill="url(#g97)"/>
<polygon points="303.13,414.8 457.55,328.67 479.75,350.16" fill="url(#g98)"/>
<polygon points="303.13,414.8 479.75,350.16 499.97,369.86" fill="url(#g99)"/>
<polygon points="303.13,414.8 479.75,350.16 499.97,369.86" fill="url(#g100)"/>
<polygon points="303.13,414.8 479.75,350.16 499.97,369.86" fill="url(#g101)"/>
<polygon points="303.13,414.8 499.97,369.86 517.57,386.93" fill="url(#g102)"/>
<polygon points="303.13,414.8 499.97,369.86 517.57,386.93" fill="url(#g103)"/>
<polygon points="303.13,414.8 499.97,369.86 517.57,386.93" fill="url(#g104)"/>
<polygon points="303.13,414.8 517.57,386.93 533.05,401.94" fill="url(#g105)"/>
<polygon points="303.13,414.8 517.57,386.93 533.05,401.94" fill="url(#g106)"/>
<polygon points="303.13,414.8 517.57,386.93 533.05,401.94" fill="url(#g107)"/>
<polygon points="303.13,414.8 533.05,401.94 545.9,414.32" fill="url(#g108)"/>
<polygon points="303.13,414.8 533.05,401.94 545.9,414.32" fill="url(#g109)"/>
<polygon points="303.13,414.8 533.05,401.94 545.9,414.32" fill="url(#g110)"/>
<polygon points="303.13,414.8 545.9,414.32 556.35,424.49" fill="url(#g111)"/>
<polygon points="303.13,414.8 545.9,414.32 556.35,424.49" fill="url(#g112)"/>
<polygon points="303.13,414.8 545.9,414.32 556.35,424.49" fill="url(#g113)"/>
<polygon points="303.13,414.8 556.35,424.49 564.67,432.6" fill="url(#g114)"/>
<polygon points="303.13,414.8 556.35,424.49 564.67,432.6" fill="url(#g115)"/>
<polygon points="303.13,414.8 556.35,424.49 564.67,432.6" fill="url(#g116)"/>
<polygon points="303.13,414.8 564.67,432.6 576.65,444.2" fill="url(#g117)"/>
<polygon points="303.13,414.8 564.67,432.6 576.65,444.2" fill="url(#g118)"/>
<polygon points="303.13,414.8 564.67,432.6 576.65,444.2" fill="url(#g119)"/>
<polygon points="303.13,414.8 576.65,444.2 584.75,452.1" fill="url(#g120)"/>
<polygon points="303.13,414.8 576.65,444.2 584.75,452.1" fill="url(#g121)"/>
<polygon points="303.13,414.8 576.65,444.2 584.75,452.1" fill="url(#g122)"/>
<polygon points="303.13,414.8 584.75,452.1 589.86,457" fill="url(#g123)"/>
<polygon points="303.13,414.8 584.75,452.1 589.86,457" fill="url(#g124)"/>
<polygon points="303.13,414.8 584.75,452.1 589.86,457" fill="url(#g125)"/>
<polygon points="303.13,414.8 589.86,457 592.78,459.85" fill="url(#g126)"/>
<polygon points="303.13,414.8 589.86,457 592.78,459.85" fill="url(#g127)"/>
<polygon points="303.13,414.8 589.86,457 592.78,459.85" fill="url(#g128)"/>
<polygon points="303.13,414.8 592.78,459.85 595.27,462.27" fill="url(#g129)"/>
<polygon points="303.13,414.8 592.78,459.85 595.27,462.27" fill="url(#g130)"/>
<polygon points="303.13,414.8 592.78,459.85 595.27,462.27" fill="url(#g131)"/>
<polygon points="303.13,414.8 595.27,462.27 596.22,463.19" fill="url(#g132)"/>
<polygon points="303.13,414.8 595.27,462.27 596.22,463.19" fill="url(#g133)"/>
<polygon points="303.13,414.8 595.27,462.27 596.22,463.19" fill="url(#g134)"/>
<polygon points="303.13,414.8 596.22,463.19 186.85,648.37" fill="url(#g135)"/>
<polygon points="303.13,414.8 596.22,463.19 186.85,648.37" fill="url(#g136)"/>
<polygon points="303.13,414.8 596.22,463.19 186.85,648.37" fill="url(#g137)"/>
</g>
<path shape-rendering="crispEdges" fill="#fff" fill-rule="evenodd" d="M73 33H697V640H73ZM193.44 635.14 L193.35 635.18 L193.24 635.22 L193.09 635.27 L192.88 635.28 L192.62 635.28 L192.3 635.26 L191.95 635.21 L191.58 635.08 L191.21 634.88 L190.83 634.63 L190.39 634.3 L189.85 633.87 L189.23 633.35 L188.53 632.74 L187.72 632.02 L186.75 631.18 L185.53 630.15 L184.11 628.95 L182.67 627.72 L181.38 626.62 L180.33 625.73 L179.42 624.95 L178.52 624.17 L177.52 623.27 L176.41 622.24 L175.24 621.13 L174 619.92 L172.7 618.57 L171.36 617.13 L169.96 615.6 L168.47 613.85 L166.84 611.72 L165.07 609.26 L163.18 606.5 L161.15 603.36 L158.99 599.71 L156.71 595.63 L154.29 591.15 L151.73 586.09 L149 580.25 L146.1 573.69 L143.05 566.48 L139.82 558.45 L136.4 549.44 L132.72 539.49 L128.83 528.66 L124.82 516.81 L120.83 503.81 L116.83 489.6 L112.77 474.25 L108.73 457.86 L104.78 440.52 L100.83 422 L96.89 402.34 L93.12 382.03 L89.69 361.53 L86.56 340.67 L83.66 319.3 L81.14 297.95 L79.15 277.17 L77.64 256.88 L76.58 236.84 L76.06 217.45 L76.19 199.06 L76.97 181.53 L78.37 164.75 L80.4 149.12 L83.08 135.03 L86.49 122.45 L90.59 111.21 L95.25 101.51 L100.3 93.56 L105.82 87.55 L111.85 83.33 L118.2 80.57 L124.68 78.93 L131.33 78.62 L138.21 79.71 L145.2 81.69 L152.17 84.03 L159.15 86.77 L166.19 90.14 L173.2 93.86 L180.07 97.65 L186.79 101.49 L193.39 105.51 L199.92 109.68 L206.39 113.96 L212.79 118.36 L219.11 122.88 L225.4 127.53 L231.67 132.28 L237.93 137.16 L244.18 142.15 L250.4 147.24 L256.61 152.41 L262.79 157.67 L268.96 163.01 L275.11 168.42 L281.27 173.89 L287.42 179.41 L293.57 185 L299.71 190.63 L305.86 196.3 L312.03 202.02 L318.2 207.79 L324.37 213.58 L330.52 219.39 L336.67 225.22 L342.8 231.08 L348.93 236.95 L355.05 242.81 L361.17 248.67 L367.28 254.54 L373.38 260.4 L379.44 266.23 L385.46 272.06 L391.46 277.87 L397.42 283.65 L403.34 289.39 L409.21 295.09 L415.05 300.76 L420.84 306.38 L426.56 311.94 L432.22 317.44 L437.82 322.88 L443.36 328.26 L448.81 333.55 L454.18 338.75 L459.48 343.87 L464.67 348.9 L469.75 353.81 L474.71 358.64 L479.56 363.37 L484.28 367.97 L488.83 372.4 L493.2 376.65 L497.41 380.73 L501.48 384.68 L505.43 388.51 L509.28 392.25 L513.02 395.87 L516.61 399.35 L520.04 402.67 L523.3 405.81 L526.4 408.8 L529.35 411.63 L532.16 414.35 L534.83 416.94 L537.35 419.4 L539.74 421.73 L542.01 423.95 L544.04 425.92 L545.85 427.69 L547.71 429.5 L549.87 431.6 L552.53 434.18 L555.53 437.08 L558.52 439.97 L561.16 442.54 L563.4 444.71 L565.39 446.65 L567.18 448.4 L568.81 449.98 L570.26 451.39 L571.53 452.6 L572.64 453.66 L573.63 454.62 L574.48 455.43 L575.17 456.1 L575.78 456.7 L576.39 457.3 L577.04 457.93 L577.68 458.55 L578.26 459.12 L578.73 459.58 L579.08 459.92 L579.33 460.16 L579.5 460.33 L579.63 460.45Z"/></g>
<path d="M78 277.5h3M79.5 276v3M82 135.5h3M83.5 134v3M123 78.5h3M124.5 77v3M179 97.5h3M180.5 96v3M230 132.5h3M231.5 131v3M280 173.5h3M281.5 172v3M329 219.5h3M330.5 218v3M378 266.5h3M379.5 265v3M425 311.5h3M426.5 310v3M468 353.5h3M469.5 352v3M504 388.5h3M505.5 387v3M531 414.5h3M532.5 413v3M548 431.5h3M549.5 430v3M567 449.5h3M568.5 448v3M578 460.5h3M579.5 459v3M192 635.5h3M193.5 634v3M180 626.5h3M181.5 625v3M171 618.5h3M172.5 617v3M158 599.5h3M159.5 598v3M135 549.5h3M136.5 548v3M103 440.5h3M104.5 439v3M302 414.5h3M303.5 413v3" stroke="#686868" stroke-width="1" fill="none" shape-rendering="crispEdges"/>
<g fill="#727272" opacity=".999"><text transform="translate(84,282) scale(0.95,1.1)">500nm</text><text transform="translate(88,140) scale(0.95,1.1)">510nm</text><text transform="translate(129,83) scale(0.95,1.1)">520nm</text><text transform="translate(185,102) scale(0.95,1.1)">530nm</text><text transform="translate(236,137) scale(0.95,1.1)">540nm</text><text transform="translate(286,178) scale(0.95,1.1)">550nm</text><text transform="translate(335,224) scale(0.95,1.1)">560nm</text><text transform="translate(384,271) scale(0.95,1.1)">570nm</text><text transform="translate(431,316) scale(0.95,1.1)">580nm</text><text transform="translate(474,358) scale(0.95,1.1)">590nm</text><text transform="translate(510,393) scale(0.95,1.1)">600nm</text><text transform="translate(537,419) scale(0.95,1.1)">610nm</text><text transform="translate(554,436) scale(0.95,1.1)">620nm</text><text transform="translate(573,454) scale(0.95,1.1)">640nm</text><text transform="translate(584,465) scale(0.95,1.1)">780nm</text><text transform="translate(186,642) scale(0.95,1.1)" text-anchor="end">380nm</text><text transform="translate(174,631) scale(0.95,1.1)" text-anchor="end">450nm</text><text transform="translate(165,623) scale(0.95,1.1)" text-anchor="end">460nm</text><text transform="translate(151,604) scale(0.95,1.1)" text-anchor="end">470nm</text><text transform="translate(129,554) scale(0.95,1.1)" text-anchor="end">480nm</text><text transform="translate(97,445) scale(0.95,1.1)" text-anchor="end">490nm</text><text transform="translate(308,419) scale(0.95,1.1)">CIE White Point</text></g>
<path d="M142.5 34V638M211.5 34V638M280.5 34V638M349.5 34V638M417.5 34V638M486.5 34V638M555.5 34V638M624.5 34V638M74 604.5H694M74 571.5H694M74 537.5H694M74 504.5H694M74 470.5H694M74 437.5H694M74 403.5H694M74 370.5H694M74 336.5H694M74 302.5H694M74 269.5H694M74 235.5H694M74 202.5H694M74 168.5H694M74 135.5H694M74 101.5H694M74 68.5H694" stroke="#9e9c00" stroke-width="1" fill="none" shape-rendering="crispEdges"/>
<path d="M244.1 474.8 L246.45 471.16 L249.76 465.97 L253.8 459.99 L258.3 454 L263.49 447.87 L269.39 441.31 L275.51 434.81 L281.3 428.9 L286.61 423.79 L291.73 419.17 L296.8 414.8 L302 410.4 L307.27 405.93 L312.56 401.52 L318.01 397.17 L323.8 392.9 L330.04 388.57 L336.63 384.22 L343.35 380.11 L350 376.5 L356.69 373.47 L363.47 370.88 L370.06 368.64 L376.2 366.7 L381.67 365.09 L386.66 363.84 L391.49 362.81 L396.5 361.9 L401.61 360.99 L406.71 360.16 L412.03 359.61 L417.8 359.5 L424.33 359.94 L431.42 360.82 L438.52 361.99 L445.1 363.3 L450.93 364.75 L456.34 366.4 L461.57 368.23 L466.9 370.2 L472.69 372.48 L478.71 375.02 L484.3 377.51 L488.8 379.6 L491.8 381.12 L493.74 382.26 L495.2 383.3 L496.8 384.5 L498.59 385.9 L500.27 387.38 L501.95 388.91 L503.7 390.5 L505.56 392.16 L507.47 393.89 L509.4 395.65 L511.3 397.4 L513.17 399.17 L515.04 400.96 L516.86 402.72 L518.6 404.4 L520.23 405.98 L521.78 407.49 L523.29 408.96 L524.8 410.4 L526.23 411.72 L527.58 412.94 L529.04 414.26 L530.8 415.9 L533.01 418.03 L535.55 420.51 L538.14 423.03 L540.5 425.3 L542.73 427.38 L544.91 429.39 L546.78 431.1 L548.1 432.3" stroke="#7e848e" stroke-width="1" fill="none" shape-rendering="crispEdges"/>
<path d="M280.5 408.5 L376.5 348.5 L417.5 343.5 L417.5 382.5 L376.5 382.5 L280.5 453.5Z" stroke="#000" stroke-width="1" fill="none" shape-rendering="crispEdges"/>
<g fill="#000"><rect x="279.0" y="407.0" width="3" height="3"/><rect x="375.0" y="347.0" width="3" height="3"/><rect x="416.0" y="342.0" width="3" height="3"/><rect x="416.0" y="381.0" width="3" height="3"/><rect x="375.0" y="381.0" width="3" height="3"/><rect x="279.0" y="452.0" width="3" height="3"/></g>
<path d="M376.5 34V638M74 368.5H694" stroke="#f00" stroke-width="1" fill="none" shape-rendering="crispEdges"/>
<circle cx="376.5" cy="368.5" r="2.6" fill="#f00"/>
</g>
<path d="M73.5 640v5M66 638.5h5M142.5 640v5M66 571.5h5M211.5 640v5M66 504.5h5M280.5 640v5M66 437.5h5M349.5 640v5M66 370.5h5M417.5 640v5M66 302.5h5M486.5 640v5M66 235.5h5M555.5 640v5M66 168.5h5M624.5 640v5M66 101.5h5M693.5 640v5M66 34.5h5" stroke="#000" stroke-width="1" fill="none" shape-rendering="crispEdges"/>
<g fill="#000" stroke="#000" stroke-width=".15" opacity=".999"><text transform="translate(72.3,656) scale(1.0,1.0)" text-anchor="middle">0.0000</text><text transform="translate(64,642) scale(1.0,1.0)" text-anchor="end">0.0000</text><text transform="translate(141.3,656) scale(1.0,1.0)" text-anchor="middle">0.1000</text><text transform="translate(64,575) scale(1.0,1.0)" text-anchor="end">0.1000</text><text transform="translate(210.3,656) scale(1.0,1.0)" text-anchor="middle">0.2000</text><text transform="translate(64,508) scale(1.0,1.0)" text-anchor="end">0.2000</text><text transform="translate(279.3,656) scale(1.0,1.0)" text-anchor="middle">0.3000</text><text transform="translate(64,441) scale(1.0,1.0)" text-anchor="end">0.3000</text><text transform="translate(348.3,656) scale(1.0,1.0)" text-anchor="middle">0.4000</text><text transform="translate(64,374) scale(1.0,1.0)" text-anchor="end">0.4000</text><text transform="translate(416.3,656) scale(1.0,1.0)" text-anchor="middle">0.5000</text><text transform="translate(64,306) scale(1.0,1.0)" text-anchor="end">0.5000</text><text transform="translate(485.3,656) scale(1.0,1.0)" text-anchor="middle">0.6000</text><text transform="translate(64,239) scale(1.0,1.0)" text-anchor="end">0.6000</text><text transform="translate(554.3,656) scale(1.0,1.0)" text-anchor="middle">0.7000</text><text transform="translate(64,172) scale(1.0,1.0)" text-anchor="end">0.7000</text><text transform="translate(623.3,656) scale(1.0,1.0)" text-anchor="middle">0.8000</text><text transform="translate(64,105) scale(1.0,1.0)" text-anchor="end">0.8000</text><text transform="translate(692.3,656) scale(1.0,1.0)" text-anchor="middle">0.9000</text><text transform="translate(64,38) scale(1.0,1.0)" text-anchor="end">0.9000</text>
<text transform="translate(383.3,674) scale(1.0,1.0)" text-anchor="middle">x</text>
<g transform="translate(23.5,338.5) rotate(-90)"><text x="0" y="0" text-anchor="middle">y</text></g>
</g>
</svg>
</body></html>
